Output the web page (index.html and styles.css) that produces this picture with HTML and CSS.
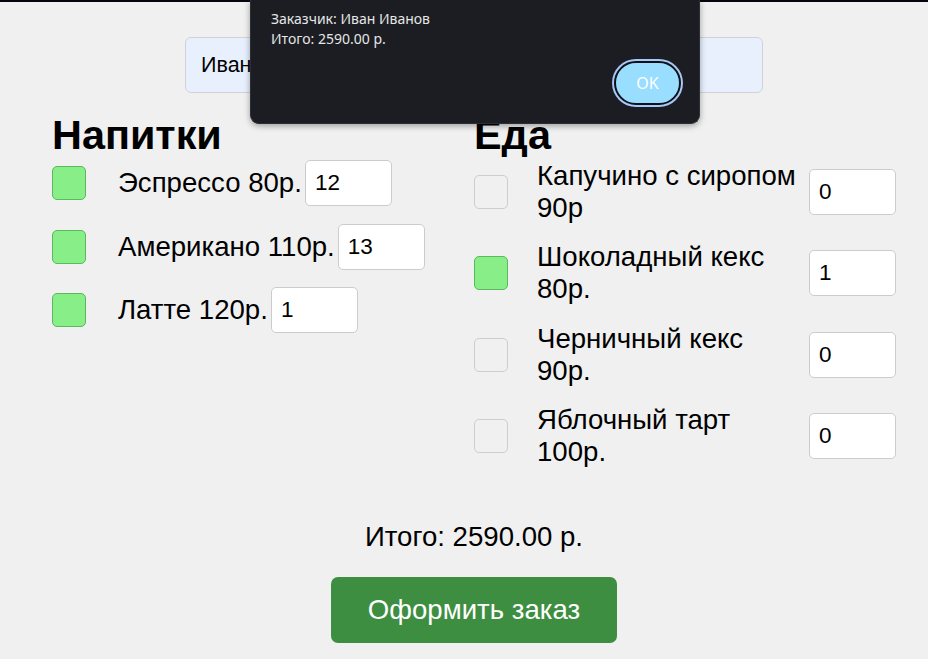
FILE: index.html
```html
<!DOCTYPE html>
<html lang="ru">
<head>
<meta charset="utf-8">
<title>Заказ</title>
<link rel="stylesheet" href="styles.css">
</head>
<body>
<div class="topbar"></div>
<main class="order">
  <input class="name" type="text" value="Иван Иванов">
  <div class="menu">
    <section class="col drinks">
      <h2 class="col-title">Напитки</h2>
      <div class="item">
        <span class="check on"></span>
        <span class="label">Эспрессо 80р.</span>
        <input class="qty" type="text" value="12">
      </div>
      <div class="item">
        <span class="check on"></span>
        <span class="label">Американо 110р.</span>
        <input class="qty" type="text" value="13">
      </div>
      <div class="item">
        <span class="check on"></span>
        <span class="label">Латте 120р.</span>
        <input class="qty" type="text" value="1">
      </div>
    </section>
    <section class="col food">
      <h2 class="col-title">Еда</h2>
      <div class="item">
        <span class="check"></span>
        <span class="label">Капучино с сиропом 90р</span>
        <input class="qty" type="text" value="0">
      </div>
      <div class="item">
        <span class="check on"></span>
        <span class="label">Шоколадный кекс 80р.</span>
        <input class="qty" type="text" value="1">
      </div>
      <div class="item">
        <span class="check"></span>
        <span class="label">Черничный кекс 90р.</span>
        <input class="qty" type="text" value="0">
      </div>
      <div class="item">
        <span class="check"></span>
        <span class="label">Яблочный тарт 100р.</span>
        <input class="qty" type="text" value="0">
      </div>
    </section>
  </div>
  <p class="total">Итого: 2590.00 р.</p>
  <button class="submit" type="button">Оформить заказ</button>
</main>
<div class="alert">
  <div class="alert-text">
    <div>Заказчик: Иван Иванов</div>
    <div>Итого: 2590.00 р.</div>
  </div>
  <div class="alert-actions">
    <button class="alert-ok" type="button">OK</button>
  </div>
</div>
</body>
</html>
```
FILE: styles.css
```css
* { box-sizing: border-box; }

html, body {
  margin: 0;
  background: #f0f0f0;
}

body {
  position: relative;
  font-family: "Liberation Sans", Arial, sans-serif;
  color: #000;
}

.topbar {
  height: 2px;
  background: #05050f;
}

.order {
  padding: 35px 32px 0 52px;
}

.name {
  display: block;
  width: 578px;
  height: 56px;
  margin: 0 auto;
  padding: 0 15px;
  border: 1px solid #cfd3d9;
  border-radius: 6px;
  background: #e8f0fe;
  font-family: "Liberation Sans", Arial, sans-serif;
  font-size: 21.5px;
  color: #000;
  outline: none;
}

.menu {
  display: grid;
  grid-template-columns: 1fr 1fr;
  margin-top: 21px;
}

.col-title {
  margin: 0 0 4px;
  font-size: 41.4px;
  line-height: 42px;
  font-weight: bold;
}

.item {
  display: flex;
  align-items: center;
  margin-bottom: 17.5px;
}

.check {
  flex: 0 0 34px;
  height: 34px;
  border: 1px solid #cdcdcd;
  border-radius: 5px;
  background: #f0f0f0;
}

.check.on {
  background: #88ee88;
  border-color: #5cb85c;
}

.label {
  font-size: 27.6px;
  line-height: 31.7px;
}

.qty {
  width: 87px;
  height: 46px;
  padding: 0 9px;
  border: 1px solid #cccccc;
  border-radius: 5px;
  background: #fff;
  font-family: "Liberation Sans", Arial, sans-serif;
  font-size: 22.5px;
  color: #000;
  outline: none;
}

.drinks .check { margin-right: 32px; }
.drinks .qty { margin-left: 3px; }

.food .item { margin-bottom: 18px; }
.food .check { margin-right: 29px; }
.food .label { flex: 1; }
.food .qty { flex: 0 0 87px; margin-left: 9px; margin-right: 0; }

.total {
  margin: 35.4px 0 0;
  text-align: center;
  font-size: 27.6px;
  line-height: 31.7px;
}

.submit {
  display: block;
  width: 286px;
  height: 66px;
  margin: 24.3px auto 0;
  border: none;
  border-radius: 7px;
  background: #3e8e41;
  color: #fff;
  font-family: "Liberation Sans", Arial, sans-serif;
  font-size: 27.6px;
}

.alert {
  position: absolute;
  top: 0;
  left: 250px;
  width: 450px;
  height: 124px;
  padding: 9px 19px 0 21px;
  background: #1b1d22;
  border: 1px solid #2c2e33;
  border-top: none;
  border-radius: 0 0 9px 9px;
  box-shadow: 0 2px 6px rgba(0, 0, 0, 0.35);
  font-family: "Noto Sans", "DejaVu Sans", sans-serif;
  color: #e6e6e6;
}

.alert-text {
  font-size: 14px;
  line-height: 19.5px;
  margin-left: -1px;
}

.alert-actions {
  display: flex;
  justify-content: flex-end;
  margin-top: 13.3px;
  margin-right: -1px;
}

.alert-ok {
  width: 67px;
  height: 44px;
  border: 2px solid #101114;
  border-radius: 22px;
  background: #99ddff;
  box-shadow: 0 0 0 2px #a8c7fa;
  color: #fff;
  font-family: "Noto Sans", "DejaVu Sans", sans-serif;
  font-size: 16px;
  padding: 0;
}
```
